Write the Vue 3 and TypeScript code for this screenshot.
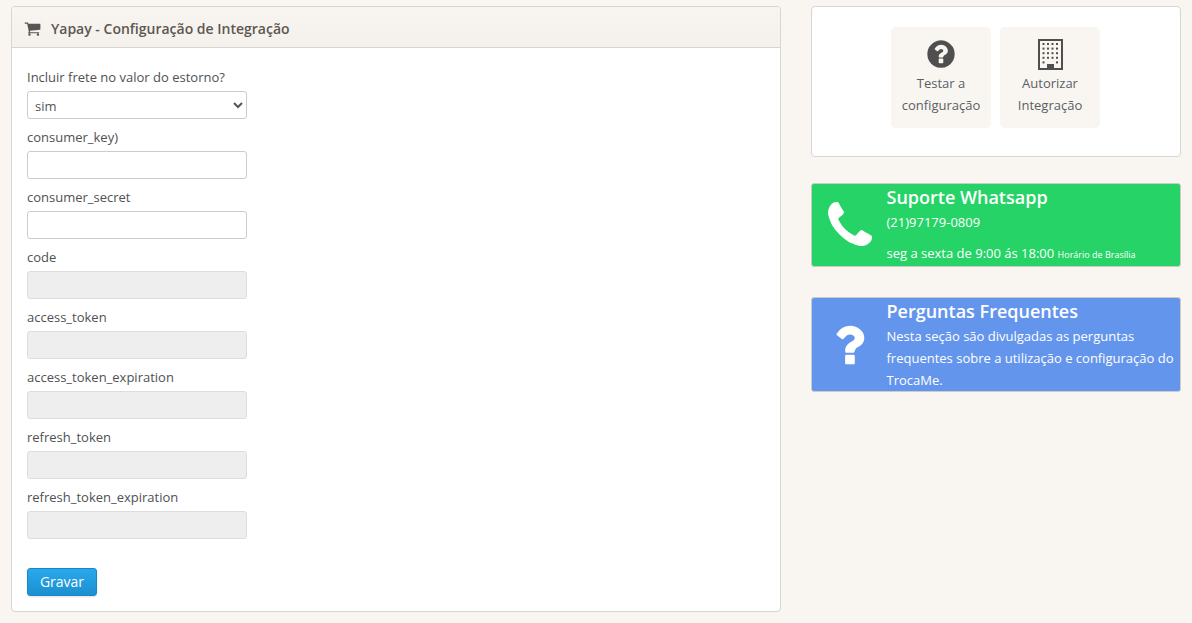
<script setup lang="ts">
interface Field {
  label: string;
  disabled: boolean;
}

const fields: Field[] = [
  { label: "consumer_key)", disabled: false },
  { label: "consumer_secret", disabled: false },
  { label: "code", disabled: true },
  { label: "access_token", disabled: true },
  { label: "access_token_expiration", disabled: true },
  { label: "refresh_token", disabled: true },
  { label: "refresh_token_expiration", disabled: true },
];

// building windows: four full rows, then only the two outer ones beside the door
const windows: number[][] = [];
for (let row = 0; row < 5; row++) {
  for (let col = 0; col < 4; col++) {
    if (row === 4 && (col === 1 || col === 2)) continue;
    windows.push([4.5 + col * 4.5, 5 + row * 4.6]);
  }
}
</script>

<template>
  <div class="page">
    <section class="panel">
      <header class="panel-head">
        <svg class="cart" viewBox="0 0 1792 1792" aria-hidden="true">
          <path d="M704 1536q0 52-38 90t-90 38-90-38-38-90 38-90 90-38 90 38 38 90zm896 0q0 52-38 90t-90 38-90-38-38-90 38-90 90-38 90 38 38 90zm128-1088v512q0 24-16.500 42.500t-40.500 21.500l-1044 122q13 60 13 70 0 16-24 64h920q26 0 45 19t19 45-19 45-45 19h-1024q-26 0-45-19t-19-45q0-11 8-31.500t16-36 21.500-40 15.500-29.500l-177-823h-204q-26 0-45-19t-19-45 19-45 45-19h256q16 0 28.500 6.500t19.500 15.500 13 24.500 8 26 5.500 29.500 4.500 26h1201q26 0 45 19t19 45z" />
        </svg>
        <h2>Yapay - Configuração de Integração</h2>
      </header>
      <form class="panel-body" @submit.prevent>
        <div class="field first">
          <label>Incluir frete no valor do estorno?</label>
          <select class="control">
            <option>sim</option>
            <option>não</option>
          </select>
        </div>
        <div v-for="f in fields" :key="f.label" class="field">
          <label>{{ f.label }}</label>
          <input class="control" type="text" :disabled="f.disabled" />
        </div>
        <button class="save" type="submit">Gravar</button>
      </form>
    </section>

    <aside class="side">
      <div class="actions">
        <a class="tile">
          <svg class="tile-icon circle" viewBox="0 0 1792 1792" aria-hidden="true">
            <path d="M1024 1376v-192q0-14-9-23t-23-9h-192q-14 0-23 9t-9 23v192q0 14 9 23t23 9h192q14 0 23-9t9-23zm256-672q0-88-55.500-163t-138.500-116-170-41q-243 0-371 213-15 24 8 42l132 100q7 6 19 6 16 0 25-12 53-68 86-92 34-24 86-24 48 0 85.500 26t37.500 59q0 38-20 61t-68 45q-63 28-115.500 86.500t-52.500 125.500v36q0 14 9 23t23 9h192q14 0 23-9t9-23q0-19 21.500-49.500t54.500-49.500q32-18 49-28.500t46-35 44.500-48 28-60.500 12.500-81zm384 192q0 209-103 385.500t-279.500 279.500-385.500 103-385.500-103-279.500-279.500-103-385.500 103-385.500 279.500-279.500 385.500-103 385.500 103 279.500 279.500 103 385.500z" />
          </svg>
          <span>Testar a<br />configuração</span>
        </a>
        <a class="tile">
          <svg class="tile-icon" viewBox="0 0 25 32" aria-hidden="true">
            <path fill-rule="evenodd" d="M0 1h25v31H0zM2 3v27h7v-4h7v4h7V3z" />
            <rect v-for="(w, i) in windows" :key="i" :x="w[0]" :y="w[1]" width="2" height="2" />
          </svg>
          <span>Autorizar<br />Integração</span>
        </a>
      </div>

      <div class="promo whatsapp">
        <div class="promo-icon">
          <svg class="phone" viewBox="0 0 1792 1792" aria-hidden="true">
            <path d="M1600 1240q0 27-10 70.500t-21 68.500q-21 50-122 106-94 51-186 51-27 0-53-3.500t-57.500-12.500-47-14.500-55.500-20.500-49-18q-98-35-175-83-127-79-264-216t-216-264q-48-77-83-175-3-9-18-49t-20.500-55.500-14.500-47-12.500-57.500-3.500-53q0-92 51-186 56-101 106-122 25-11 68.500-21t70.500-10q14 0 21 3 18 6 53 76 11 19 30 54t35 63.500 31 53.500q3 4 17.500 25t21.500 35.500 7 28.500q0 20-28.500 50t-62 55-62 53-28.500 46q0 9 5 22.500t8.500 20.500 14 24 11.500 19q76 137 174 235t235 174q2 1 19 11.500t24 14 20.500 8.500 22.500 5q18 0 46-28.500t53-62 55-62 50-28.500q14 0 28.500 7t35.500 21.500 25 17.500q25 15 53.500 31t63 35 54 30q70 35 76 53 3 7 3 21z" />
          </svg>
        </div>
        <div class="promo-text">
          <h3>Suporte Whatsapp</h3>
          <p class="phone-no">(21)97179-0809</p>
          <p class="hours">seg a sexta de 9:00 ás 18:00 <small>Horário de Brasília</small></p>
        </div>
      </div>

      <div class="promo faq">
        <div class="promo-icon">
          <svg class="question" viewBox="0 0 1792 1792" aria-hidden="true">
            <path d="M1088 1256v240q0 16-12 28t-28 12h-240q-16 0-28-12t-12-28v-240q0-16 12-28t28-12h240q16 0 28 12t12 28zm316-600q0 54-15.500 101t-35 76.500-55 59.500-57.500 43.500-61 35.500q-41 23-68.500 65t-27.500 67q0 17-12 32.500t-28 15.500h-240q-15 0-25.500-18.500t-10.500-37.500v-45q0-83 65-156.500t143-108.500q59-27 84-56t25-76q0-42-46.500-74t-107.500-32q-65 0-108 29-35 25-107 115-13 16-31 16-12 0-25-8l-164-125q-13-10-15.500-25t5.500-28q160-266 464-266 80 0 161 31t146 83 106 127.500 41 158.500z" />
          </svg>
        </div>
        <div class="promo-text">
          <h3>Perguntas Frequentes</h3>
          <p class="faq-copy">Nesta seção são divulgadas as perguntas frequentes sobre a utilização e configuração do TrocaMe.</p>
        </div>
      </div>
    </aside>
  </div>
</template>

<style>
html, body { background: #f9f6f1; }
</style>

<style scoped>
.page {
  display: flex;
  align-items: flex-start;
  gap: 30px;
  height: 623px;
  box-sizing: border-box;
  padding: 6px 11px 0;
  font-family: "Open Sans", "Liberation Sans", sans-serif;
  font-size: 13px;
  line-height: 22px;
  color: #4d5259;
  background: #f9f6f1;
}

.panel {
  width: 770px;
  height: 606px;
  box-sizing: border-box;
  background: #fff;
  border: 1px solid #d8d6d2;
  border-radius: 4px;
  flex: none;
}
.panel-head {
  display: flex;
  align-items: center;
  height: 41px;
  box-sizing: border-box;
  padding: 3px 0 0 12px;
  background: linear-gradient(#f8f5f0, #f4f1ec);
  border-bottom: 1px solid #d8d6d2;
  border-radius: 4px 4px 0 0;
}
.cart { width: 17px; height: 17px; fill: #555; margin-right: 10px; }
.panel-head h2 {
  margin: 0;
  font-size: 14px;
  font-weight: 600;
  color: #5c5751;
}
.panel-body { padding: 18px 15px 0; }

.field { margin-bottom: 7px; }
.field label { display: block; height: 22px; margin-bottom: 3px; line-height: 22px; color: #4e5155; }
.control {
  display: block;
  width: 220px;
  height: 28px;
  box-sizing: border-box;
  padding: 0 7px;
  background-color: #fff;
  border: 1px solid #ccc;
  border-radius: 3px;
  font: inherit;
  color: #555;
}
select.control { padding: 2px 3px 0; }
.control:disabled { background: #eee; border-color: #ddd; }
.save {
  display: block;
  width: 70px;
  height: 28px;
  margin-top: 29px;
  padding: 0;
  border: 1px solid #1a87c4;
  border-radius: 3px;
  background: linear-gradient(#29a9ec, #1b8fd0);
  box-shadow: 0 1px 2px rgba(0, 0, 0, 0.12);
  font: inherit;
  font-size: 14px;
  color: #fff;
}

.side { width: 370px; flex: none; }
.actions {
  display: flex;
  justify-content: center;
  gap: 9px;
  height: 151px;
  box-sizing: border-box;
  padding: 20px 1px 0 0;
  margin-bottom: 26px;
  background: #fff;
  border: 1px solid #d8d6d2;
  border-radius: 4px;
}
.tile {
  display: flex;
  flex-direction: column;
  align-items: center;
  width: 100px;
  height: 101px;
  box-sizing: border-box;
  padding-top: 11px;
  background: #f9f6f1;
  border-radius: 5px;
  text-align: center;
  color: #5a5f66;
}
.tile-icon { width: 25px; height: 32px; fill: #4f4f4f; margin-bottom: 2px; }
.tile-icon.circle { width: 32px; }

.promo {
  display: flex;
  box-sizing: border-box;
  border: 1px solid #cfccc8;
  border-radius: 3px;
  color: #fff;
}
.whatsapp { height: 84px; margin-bottom: 30px; background: #25d366; }
.faq { height: 95px; background: #6495ed; }
.promo-icon {
  display: flex;
  align-items: center;
  justify-content: center;
  width: 74.5px;
  flex: none;
}
.phone { width: 56px; height: 56px; fill: #fff; margin-left: 1px; margin-top: 1px; }
.question { width: 54px; height: 54px; fill: #fff; }
.promo-text { flex: 1; min-width: 0; }
.promo-text h3 { margin: 0; height: 27px; font-size: 18px; line-height: 27px; font-weight: 600; }
.promo-text p { margin: 0; }
.phone-no { font-size: 13px; }
.hours { margin-top: 9px !important; }
.hours small { font-size: 9px; }
.faq-copy { line-height: 22px; }
</style>
